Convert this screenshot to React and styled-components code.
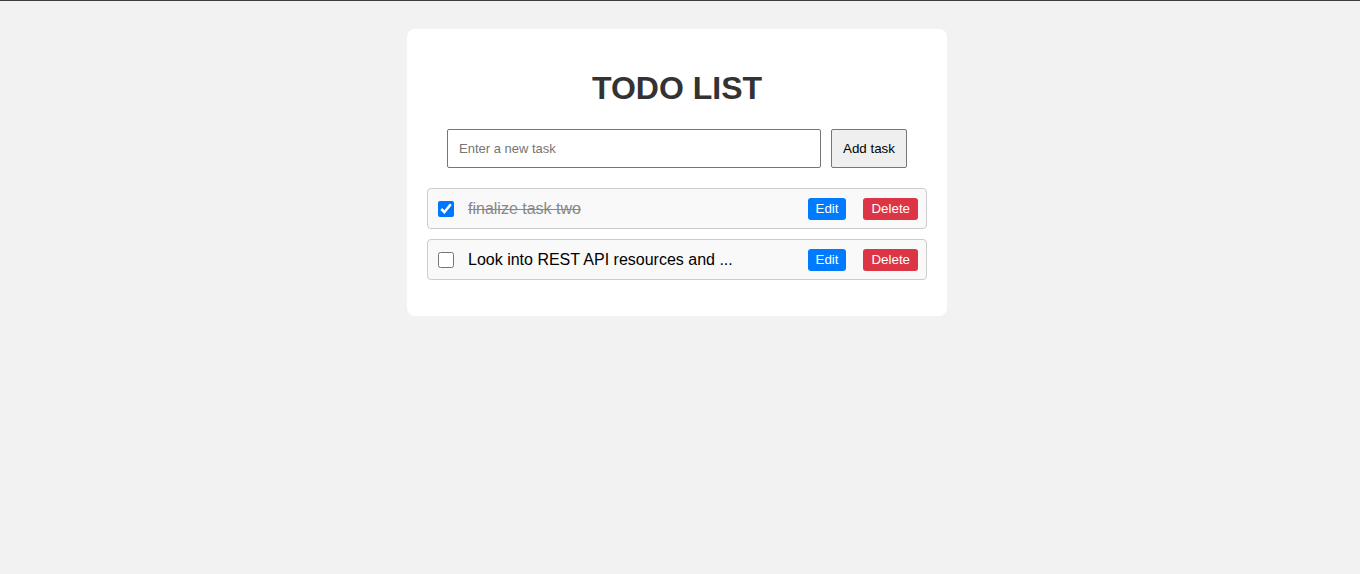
import styled, { createGlobalStyle } from 'styled-components'

const GlobalStyle = createGlobalStyle`
    html, body {
        margin: 0;
        padding: 0;
        background-color: #f2f2f2;
        font-family: "Liberation Sans", Arial, sans-serif;
    }
    body {
        border-top: 1px solid #3d3d3d;
        min-height: 100vh;
        box-sizing: border-box;
    }
`

const todos = [
    { id: 1, text: 'finalize task two', done: true },
    { id: 2, text: 'Look into REST API resources and ...', done: false },
]

const App = () => {
    return (
        <>
            <GlobalStyle />
            <Page>
                <Card>
                    <Title>TODO LIST</Title>
                    <Form onSubmit={(e) => e.preventDefault()}>
                        <TaskInput type="text" placeholder="Enter a new task" />
                        <AddButton type="submit">Add task</AddButton>
                    </Form>
                    <List>
                        {todos.map((todo) => (
                            <Item key={todo.id}>
                                <Check type="checkbox" defaultChecked={todo.done} />
                                <ItemText $done={todo.done}>{todo.text}</ItemText>
                                <Actions>
                                    <ActionButton $color="#007bff">Edit</ActionButton>
                                    <ActionButton $color="#dc3545">Delete</ActionButton>
                                </Actions>
                            </Item>
                        ))}
                    </List>
                </Card>
            </Page>
        </>
    )
}

const Page = styled.div`
    display: flex;
    justify-content: center;
    padding: 28px 6px 0 0;
`

const Card = styled.div`
    width: 540px;
    box-sizing: border-box;
    background-color: #ffffff;
    border-radius: 8px;
    padding: 20px 20px 36px;
`

const Title = styled.h1`
    margin: 21px 0 22px;
    text-align: center;
    font-size: 32px;
    line-height: 37px;
    font-weight: bold;
    color: #333;
`

const Form = styled.form`
    display: flex;
    justify-content: center;
    gap: 10px;
    margin: 0;
`

const TaskInput = styled.input`
    width: 374px;
    height: 39px;
    box-sizing: border-box;
    padding: 0 11px;
    border: 1px solid #767676;
    border-radius: 2px;
    font-family: "Liberation Sans", Arial, sans-serif;
    font-size: 13px;
    color: #000;
    outline: none;
    &::placeholder {
        color: #757575;
    }
`

const AddButton = styled.button`
    width: 76px;
    height: 39px;
    box-sizing: border-box;
    background-color: #efefef;
    border: 1px solid #767676;
    border-radius: 2px;
    font-family: "Liberation Sans", Arial, sans-serif;
    font-size: 13.33px;
    color: #000;
    padding: 0;
    cursor: pointer;
`

const List = styled.ul`
    list-style: none;
    margin: 20px 0 0;
    padding: 0;
    display: flex;
    flex-direction: column;
    gap: 10px;
`

const Item = styled.li`
    display: flex;
    align-items: center;
    height: 41px;
    box-sizing: border-box;
    padding: 0 8px 0 10px;
    background-color: #f9f9f9;
    border: 1px solid #ccc;
    border-radius: 4px;
`

const Check = styled.input`
    width: 16px;
    height: 16px;
    margin: 0 14px 0 0;
    cursor: pointer;
`

const ItemText = styled.span`
    flex: 1;
    font-size: 16px;
    color: ${(p) => (p.$done ? '#888' : '#000')};
    text-decoration: ${(p) => (p.$done ? 'line-through' : 'none')};
`

const Actions = styled.div`
    display: flex;
    gap: 17px;
`

const ActionButton = styled.button`
    height: 22px;
    padding: 0 8px;
    border: none;
    border-radius: 3px;
    background-color: ${(p) => p.$color};
    color: #fff;
    font-family: "Liberation Sans", Arial, sans-serif;
    font-size: 13.33px;
    cursor: pointer;
`

export default App
